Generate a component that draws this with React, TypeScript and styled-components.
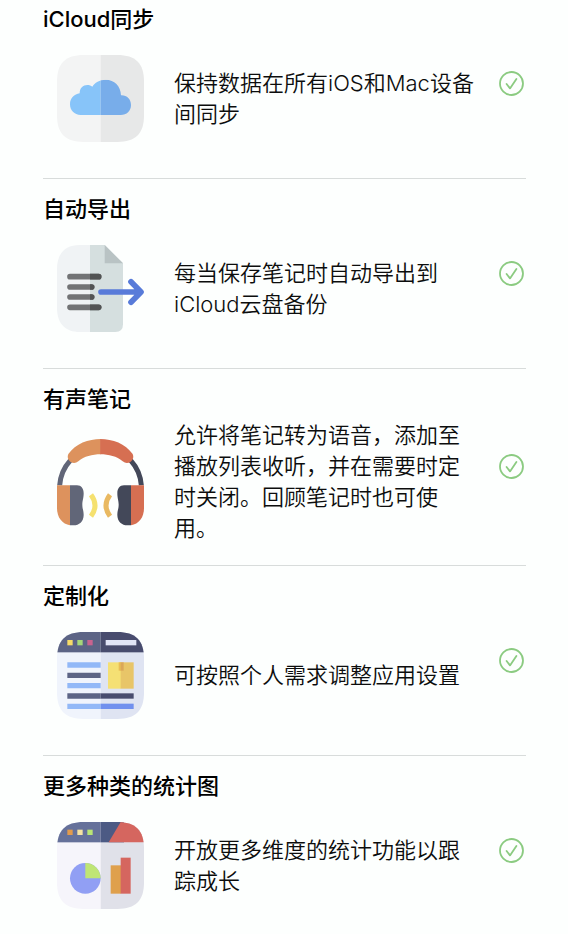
import React from "react";
import styled, { createGlobalStyle } from "styled-components";

const GlobalStyle = createGlobalStyle`
  *, *::before, *::after { box-sizing: border-box; }
  body {
    margin: 0;
    background: #fdfffe;
    color: #0c0d0d;
    font-family: Inter, "Noto Sans CJK SC", sans-serif;
    font-size: 22px;
    line-height: 31px;
  }
`;

const FeatureList = styled.main`
  padding: 0 42px 0 43px;
`;

const Feature = styled.section`
  padding: 16px 0 21px;
  border-bottom: 1px solid #d8dcdb;

  &:first-child { padding-top: 5px; }
  &:last-child { padding-bottom: 0; border-bottom: 0; }
`;

const FeatureTitle = styled.h2`
  margin: 0 0 7px;
  font-size: 22px;
  line-height: 28px;
  font-weight: 500;
  color: #000;
`;

const FeatureRow = styled.div`
  display: flex;
  align-items: center;
  gap: 30px;
  min-height: 117px;
  padding-left: 14px;
`;

const FeatureIcon = styled.svg`
  flex: none;
  width: 87px;
  height: 87px;
  overflow: visible;
`;

const Description = styled.p`
  flex: 1;
  min-width: 0;
  margin: 0;
  font-weight: 350;
`;

const Status = styled.div`
  flex: none;
  display: flex;
  margin-left: -8px;
  padding: 0 2px 31px 0;
`;

const Check = () => (
  <svg width="25" height="25" viewBox="0 0 25 25" fill="none" stroke="#8bcb81" role="img" aria-label="已包含">
    <circle cx="12.5" cy="12.5" r="11.5" strokeWidth="1.8" />
    <path d="M7.6 13 L11 17.4 L17.4 8" strokeWidth="1.8" strokeLinecap="round" strokeLinejoin="round" />
  </svg>
);

const TILE = "M0 80 C0 25 25 0 80 0 H181 C236 0 261 25 261 80 V181 C261 236 236 261 181 261 H80 C25 261 0 236 0 181 Z";

const Tile = ({ id, children }: { id: string; children: React.ReactNode }) => (
  <FeatureIcon viewBox="0 0 261 261" aria-hidden="true">
    <clipPath id={id}><path d={TILE} /></clipPath>
    <g clipPath={`url(#${id})`}>{children}</g>
  </FeatureIcon>
);

const CLOUD =
  "M71 180 C52 180 39 166 39 148 C39 130 52 117 68 115 C68 99 78 90 91 90 C97 90 102 92 106 95 C113 83 128 74 146 74 C172 74 191 93 192 121 C209 120 222 132 222 150 C222 168 209 180 191 180 Z";

const CloudIcon = () => (
  <Tile id="cloud-tile">
    <rect width="131" height="261" fill="#f3f4f4" />
    <rect x="131" width="130" height="261" fill="#e7e8e8" />
    <clipPath id="cloud-shape"><path d={CLOUD} /></clipPath>
    <g clipPath="url(#cloud-shape)">
      <rect width="131" height="261" fill="#87c4f9" />
      <rect x="131" width="130" height="261" fill="#78adea" />
    </g>
  </Tile>
);

const ExportIcon = () => (
  <FeatureIcon viewBox="0 0 261 261" aria-hidden="true">
    <path d="M99 0 H68 C25 0 0 25 0 72 V189 C0 236 25 261 68 261 H99 Z" fill="#f0f3f5" />
    <path d="M99 0 H143 L198 55 V238 Q198 261 175 261 H99 Z" fill="#d5dfdf" />
    <path d="M143 0 L198 55 H143 Z" fill="#b9c3c4" />
    <path d="M39 95 H125 M39 126 H104 M39 156 H104 M39 187 H125" stroke="#727375" strokeWidth="17" strokeLinecap="round" />
    <g fill="#515353">
      <path d="M99 86.500 H125 A8.500 8.500 0 0 1 125 103.500 H99 Z" />
      <path d="M99 117.500 H104 A8.500 8.500 0 0 1 104 134.500 H99 Z" />
      <path d="M99 147.500 H104 A8.500 8.500 0 0 1 104 164.500 H99 Z" />
      <path d="M99 178.500 H125 A8.500 8.500 0 0 1 125 195.500 H99 Z" />
    </g>
    <path d="M132 141 H248 M222 110 L252 141 L222 172" fill="none" stroke="#587bd9" strokeWidth="17" strokeLinecap="round" strokeLinejoin="round" />
  </FeatureIcon>
);

const BAND = "M131.500 0 V46 C105 46 82 52 64 67 Q52 77 40 68 Q28 58 34 45 C56 14 94 0 131.500 0 Z";
const SHELL = "M0 139 H39 V259 C16 255 0 236 0 207 Z";
const CUP = "M39 139 H60 C73 139 80 149 80 163 C80 178 76 184 76 197 C76 210 80 214 80 228 C80 248 66 259 50 259 H39 Z";

const HeadphoneSide = ({ accent, dark, wave }: { accent: string; dark: string; wave: string }) => (
  <>
    <path d="M8 139 Q11 96 40 64" fill="none" stroke={dark} strokeWidth="15" />
    <path d={BAND} fill={accent} />
    <path d="M102 167 Q126 199 102 232" fill="none" stroke={wave} strokeWidth="15" />
    <path d={SHELL} fill={accent} />
    <path d={CUP} fill={dark} />
  </>
);

const HeadphonesIcon = () => (
  <FeatureIcon viewBox="0 0 261 261" aria-hidden="true">
    <HeadphoneSide accent="#dd925d" dark="#616678" wave="#f5e16f" />
    <g transform="translate(261 0) scale(-1 1)">
      <HeadphoneSide accent="#d66f52" dark="#434859" wave="#e9b961" />
    </g>
  </FeatureIcon>
);

const BrowserIcon = () => (
  <Tile id="browser-tile">
    <rect width="131" height="261" fill="#f0f4fc" />
    <rect x="131" width="130" height="261" fill="#dfe4f2" />
    <rect width="131" height="61" fill="#5c6485" />
    <rect x="131" width="130" height="61" fill="#484c6e" />
    <rect x="31" y="24" width="16" height="16" fill="#f6dc68" />
    <rect x="61" y="24" width="16" height="16" fill="#a6d879" />
    <rect x="91" y="24" width="16" height="16" fill="#c9638f" />
    <rect x="146" y="24" width="92" height="16" fill="#e1e5f7" />
    <path d="M31 91 H131 V107 H31 Z M31 153 H131 V169 H31 Z M31 215 H131 V231 H31 Z" fill="#92b8f7" />
    <path d="M31 122 H131 V138 H31 Z M31 184 H131 V200 H31 Z" fill="#5c6485" />
    <rect x="131" y="184" width="99" height="16" fill="#484c6e" />
    <rect x="131" y="215" width="99" height="16" fill="#7190ee" />
    <rect x="153" y="91" width="39" height="79" fill="#f5e074" />
    <rect x="191" y="91" width="39" height="79" fill="#e8c568" />
    <rect x="185" y="91" width="7" height="25" fill="#e9bd55" />
    <rect x="191" y="91" width="9" height="25" fill="#dba758" />
  </Tile>
);

const StatsIcon = () => (
  <Tile id="stats-tile">
    <rect width="131" height="261" fill="#f6f5fb" />
    <rect x="131" width="130" height="261" fill="#e0e1e9" />
    <rect width="131" height="61" fill="#65719a" />
    <rect x="131" width="70" height="61" fill="#4c5a84" />
    <path d="M191 0 H261 V61 H155 Z" fill="#d5665f" />
    <rect x="31" y="23" width="16" height="16" fill="#e29b4d" />
    <rect x="61" y="23" width="16" height="16" fill="#f5e3a2" />
    <rect x="91" y="23" width="16" height="16" fill="#b9e575" />
    <circle cx="85" cy="169" r="46" fill="#919ff4" />
    <path d="M85 169 V123 A46 46 0 0 1 131 169 Z" fill="#bfe575" />
    <rect x="161" y="130" width="31" height="85" fill="#dfa04c" />
    <rect x="191" y="107" width="30" height="108" fill="#d5665f" />
  </Tile>
);

const features = [
  { title: "iCloud同步", text: "保持数据在所有iOS和Mac设备间同步", Icon: CloudIcon },
  { title: "自动导出", text: "每当保存笔记时自动导出到iCloud云盘备份", Icon: ExportIcon },
  { title: "有声笔记", text: "允许将笔记转为语音，添加至播放列表收听，并在需要时定时关闭。回顾笔记时也可使用。", Icon: HeadphonesIcon },
  { title: "定制化", text: "可按照个人需求调整应用设置", Icon: BrowserIcon },
  { title: "更多种类的统计图", text: "开放更多维度的统计功能以跟踪成长", Icon: StatsIcon },
];

export default function App() {
  return (
    <>
      <GlobalStyle />
      <FeatureList lang="zh-CN">
        {features.map(({ title, text, Icon }) => (
          <Feature key={title}>
            <FeatureTitle>{title}</FeatureTitle>
            <FeatureRow>
              <Icon />
              <Description>{text}</Description>
              <Status><Check /></Status>
            </FeatureRow>
          </Feature>
        ))}
      </FeatureList>
    </>
  );
}
